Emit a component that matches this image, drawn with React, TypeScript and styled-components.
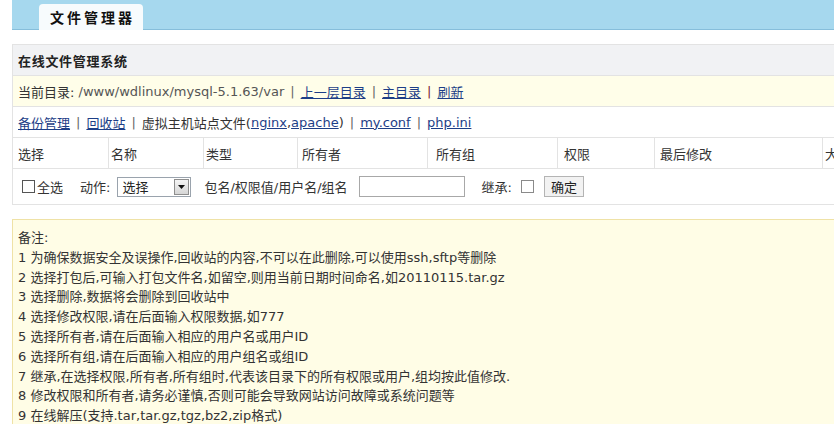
import React from "react";
import styled, { createGlobalStyle } from "styled-components";

const GlobalStyle = createGlobalStyle`
  html, body { margin: 0; padding: 0; background: #fff; overflow: hidden; }
  body {
    font-family: "DejaVu Sans", "Noto Sans CJK SC", sans-serif;
    font-size: 13px;
    color: #333;
  }
`;

const Page = styled.div`
  width: 1100px;
  padding-left: 12px;
`;

const TopBar = styled.div`
  height: 29px;
  background: #a6d8ee;
  border-bottom: 1px solid #86bedb;
  display: flex;
  align-items: flex-end;
  padding-left: 27px;
`;

const Tab = styled.div`
  width: 104px;
  height: 26px;
  margin-bottom: -1px;
  background: #f7fbfd;
  border-radius: 4px 4px 0 0;
  display: flex;
  align-items: center;
  justify-content: center;
  padding-left: 3px;
  box-sizing: border-box;
  font-family: "Noto Sans CJK SC", sans-serif;
  font-weight: bold;
  font-size: 14px;
  letter-spacing: 3px;
  color: #111;
`;

const Panel = styled.div`
  margin-top: 14px;
  border-top: 1px solid #e3e3e3;
  border-left: 1px solid #e3e3e3;
`;

const Row = styled.div<{ $bg?: string }>`
  height: 30px;
  background: ${(p) => p.$bg ?? "#fff"};
  border-bottom: 1px solid #e3e3e3;
  display: flex;
  align-items: center;
  padding-left: 5px;
  white-space: nowrap;
`;

const Title = styled.span`
  font-family: "Noto Sans CJK SC", sans-serif;
  font-weight: bold;
  font-size: 13px;
  letter-spacing: 0.7px;
  color: #222;
`;

const Label = styled.span`
  color: #333;
`;

const Path = styled.span`
  color: #555;
`;

const Link = styled.a`
  color: #1d3e87;
  text-decoration: underline;
  cursor: pointer;
`;

const Sep = styled.span<{ $dark?: boolean }>`
  color: ${(p) => (p.$dark ? "#7a1d2e" : "#666")};
  margin: 0 6px;
`;

const HeadRow = styled.div`
  height: 30px;
  border-bottom: 1px solid #e3e3e3;
  display: grid;
  grid-template-columns: 95px 95px 94px 130px 130px 97px 168px 1fr;
  white-space: nowrap;
`;

const HeadCell = styled.div<{ $pad: number; $first?: boolean }>`
  display: flex;
  align-items: center;
  padding-left: ${(p) => p.$pad}px;
  border-left: ${(p) => (p.$first ? "none" : "1px solid #e3e3e3")};
  color: #333;
`;

const ActionRow = styled.div`
  height: 35px;
  border-bottom: 1px solid #e3e3e3;
  display: flex;
  align-items: center;
  white-space: nowrap;
  color: #333;
`;

const Check = styled.span<{ $ml: number; $light?: boolean }>`
  display: inline-block;
  width: 11px;
  height: 11px;
  margin-left: ${(p) => p.$ml}px;
  border: 1px solid ${(p) => (p.$light ? "#8a8a8a" : "#555")};
  background: #fff;
`;

const Text = styled.span<{ $ml?: number }>`
  margin-left: ${(p) => p.$ml ?? 0}px;
`;

const Select = styled.div`
  margin-left: 7px;
  width: 74px;
  height: 20px;
  box-sizing: border-box;
  border: 1px solid #9aa3ad;
  background: #fff;
  display: flex;
  align-items: stretch;
`;

const SelectText = styled.span`
  flex: 1;
  display: flex;
  align-items: center;
  padding-left: 4px;
  color: #222;
`;

const SelectArrow = styled.span`
  width: 15px;
  margin: 1px;
  background: linear-gradient(#f4f4f4, #d6d6d6);
  border: 1px solid #8e8e8e;
  box-sizing: border-box;
  display: flex;
  align-items: center;
  justify-content: center;
`;

const Input = styled.div`
  margin-left: 11px;
  width: 106px;
  height: 21px;
  box-sizing: border-box;
  border: 1px solid #a8a8a8;
  background: #fff;
`;

const Button = styled.div`
  margin-left: 10px;
  width: 40px;
  height: 21px;
  box-sizing: border-box;
  border: 1px solid #b4b4b4;
  background: #f2f2f2;
  display: flex;
  align-items: center;
  justify-content: center;
  color: #222;
`;

const Note = styled.div`
  margin-top: 14px;
  border-top: 1px solid #efe2a6;
  border-left: 1px solid #efe2a6;
  background: #fffde6;
  padding: 8px 5px 20px;
  line-height: 19.8px;
  color: #333;
  white-space: nowrap;
`;

const columns = [
  { name: "选择", pad: 5 },
  { name: "名称", pad: 2 },
  { name: "类型", pad: 2 },
  { name: "所有者", pad: 4 },
  { name: "所有组", pad: 8 },
  { name: "权限", pad: 6 },
  { name: "最后修改", pad: 5 },
  { name: "大小", pad: 2 },
];

const notes = [
  "备注:",
  "1 为确保数据安全及误操作,回收站的内容,不可以在此删除,可以使用ssh,sftp等删除",
  "2 选择打包后,可输入打包文件名,如留空,则用当前日期时间命名,如20110115.tar.gz",
  "3 选择删除,数据将会删除到回收站中",
  "4 选择修改权限,请在后面输入权限数据,如777",
  "5 选择所有者,请在后面输入相应的用户名或用户ID",
  "6 选择所有组,请在后面输入相应的用户组名或组ID",
  "7 继承,在选择权限,所有者,所有组时,代表该目录下的所有权限或用户,组均按此值修改.",
  "8 修改权限和所有者,请务必谨慎,否则可能会导致网站访问故障或系统问题等",
  "9 在线解压(支持.tar,tar.gz,tgz,bz2,zip格式)",
];

export default function App() {
  return (
    <>
      <GlobalStyle />
      <Page>
        <TopBar>
          <Tab>文件管理器</Tab>
        </TopBar>
        <Panel>
          <Row $bg="#f1f2f4">
            <Title>在线文件管理系统</Title>
          </Row>
          <Row $bg="#fffee9">
            <Label>当前目录:&nbsp;</Label>
            <Path>/www/wdlinux/mysql-5.1.63/var</Path>
            <Sep>|</Sep>
            <Link>上一层目录</Link>
            <Sep>|</Sep>
            <Link>主目录</Link>
            <Sep $dark>|</Sep>
            <Link>刷新</Link>
          </Row>
          <Row>
            <Link>备份管理</Link>
            <Sep>|</Sep>
            <Link>回收站</Link>
            <Sep>|</Sep>
            <Label>虚拟主机站点文件(</Label>
            <Link>nginx</Link>
            <Label>,</Label>
            <Link>apache</Link>
            <Label>)</Label>
            <Sep>|</Sep>
            <Link>my.conf</Link>
            <Sep>|</Sep>
            <Link>php.ini</Link>
          </Row>
          <HeadRow>
            {columns.map((c, i) => (
              <HeadCell key={c.name} $pad={c.pad} $first={i === 0}>
                {c.name}
              </HeadCell>
            ))}
          </HeadRow>
          <ActionRow>
            <Check $ml={9} />
            <Text $ml={2}>全选</Text>
            <Text $ml={17}>动作:</Text>
            <Select>
              <SelectText>选择</SelectText>
              <SelectArrow>
                <svg width="7" height="4" viewBox="0 0 7 4">
                  <path d="M0 0h7L3.5 4z" fill="#111" />
                </svg>
              </SelectArrow>
            </Select>
            <Text $ml={13}>包名/权限值/用户名/组名</Text>
            <Input />
            <Text $ml={17}>继承:</Text>
            <Check $ml={9} $light />
            <Button>确定</Button>
          </ActionRow>
        </Panel>
        <Note>
          {notes.map((n) => (
            <div key={n}>{n}</div>
          ))}
        </Note>
      </Page>
    </>
  );
}
